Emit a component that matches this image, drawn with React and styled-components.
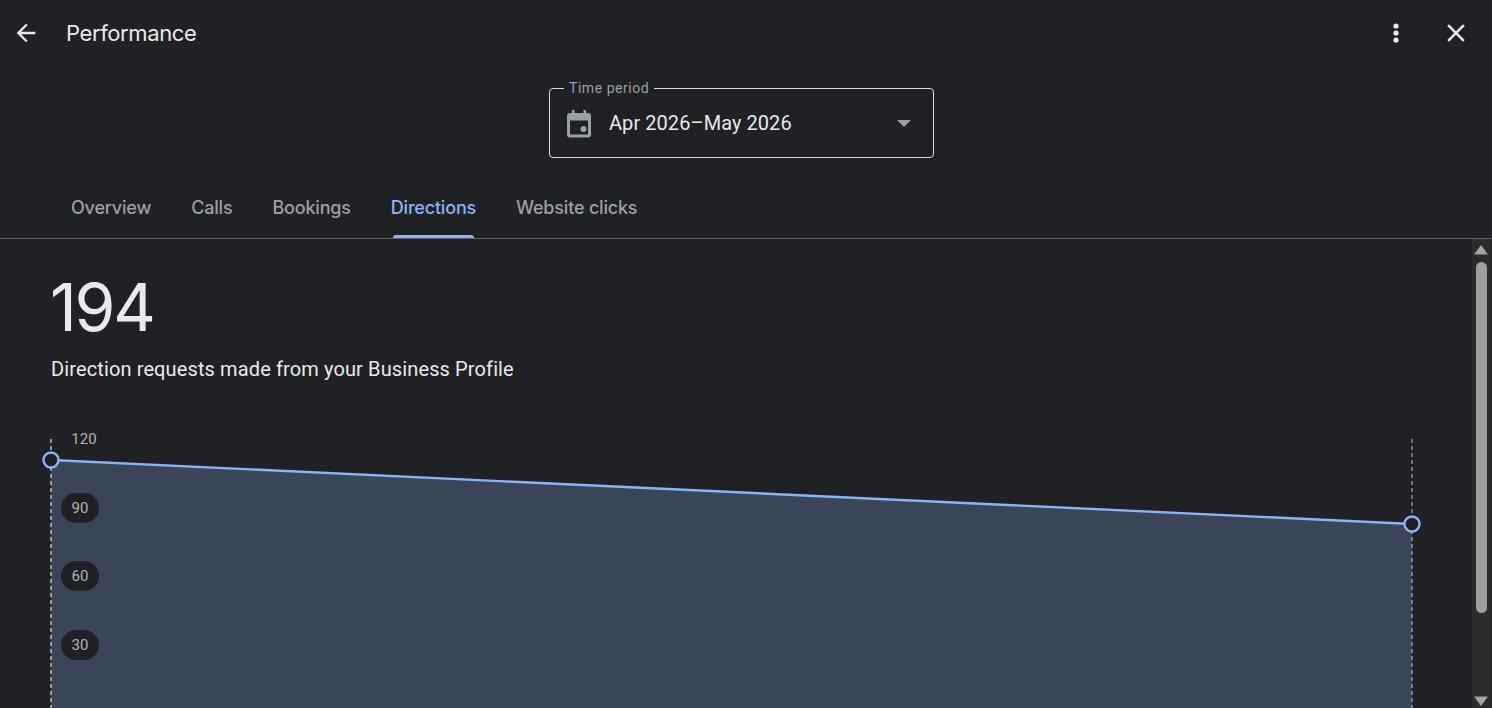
import React from "react";
import styled, { createGlobalStyle } from "styled-components";

const Global = createGlobalStyle`
  html, body { margin: 0; padding: 0; height: 708px; overflow: hidden; background: #202124; }
  * { box-sizing: border-box; }
`;

const Page = styled.div`
  width: 1492px; height: 708px; background: #202124; overflow: hidden;
  display: flex; flex-direction: column; font-family: Roboto, "Liberation Sans", sans-serif;
`;
const TopBar = styled.header`
  height: 66px; flex: none; display: flex; align-items: center; padding: 0 21px 0 11px;
`;
const IconButton = styled.button`
  width: 30px; height: 30px; padding: 0; border: 0; background: none; color: #e8eaed;
  display: flex; align-items: center; justify-content: center;
  margin-left: ${p => p.$ml || 0}px;
`;
const Title = styled.h1`
  margin: 0 0 0 25px; flex: 1; font: 400 22px/28px Inter, "Open Sans", sans-serif; letter-spacing: -0.4px; color: #e8eaed;
`;
const PickerRow = styled.div`
  flex: none; display: flex; justify-content: center; padding: 22px 9px 0 0; height: 92px;
`;
const Picker = styled.div`
  position: relative; width: 385px; height: 70px; border: 1px solid #dadce0; border-radius: 4px;
  display: flex; align-items: center; padding: 0 22px 0 17px;
`;
const PickerLabel = styled.span`
  position: absolute; left: 14px; top: -9px; padding: 0 5px; background: #202124;
  font-size: 14px; line-height: 16px; color: #9aa0a6; letter-spacing: 0.55px;
`;
const PickerValue = styled.span`
  margin-left: 18px; flex: 1; font-size: 20px; letter-spacing: 0.06px; line-height: 26px; color: #e8eaed;
`;
const Tabs = styled.nav`
  flex: none; height: 81px; display: flex; align-items: stretch; padding-left: 51px;
  border-bottom: 1px solid #5f6368;
`;
const Tab = styled.div`
  position: relative; padding: 38px 20px 0; font: 500 18px/24px Inter, Roboto, sans-serif; letter-spacing: -0.19px;
  color: ${p => (p.$active ? "#8ab4f8" : "#9aa0a6")};
  ${p => p.$active && `&::after { content: ""; position: absolute; left: 22px; right: 22px; bottom: 0; height: 3px; background: #8ab4f8; border-radius: 3px 3px 0 0; }`}
`;
const Body = styled.div`
  flex: 1; min-height: 0; display: flex;
`;
const Content = styled.main`
  flex: 1; min-width: 0; padding: 29px 0 0 51px; overflow: hidden;
`;
const Total = styled.div`
  font: 400 66px/78px Inter, "Open Sans", sans-serif; letter-spacing: -2.3px; color: #e8eaed; margin-left: -1px;
`;
const Caption = styled.p`
  margin: 10px 0 0; font-size: 20px; letter-spacing: 0.12px; line-height: 26px; color: #e8eaed;
`;
const Chart = styled.div`
  position: relative; margin: 57px 0 0; height: 280px;
`;
const ChartSvg = styled.svg`
  position: absolute; left: -11px; top: 0; overflow: visible; display: block;
`;
const AxisLabel = styled.span`
  position: absolute; left: ${p => (p.$plain ? 14 : 10)}px; top: ${p => p.$top}px; width: 38px; height: 30px; border-radius: 15px;
  display: flex; align-items: center; justify-content: center;
  font-size: 15px; color: #b0b3b8; background: ${p => (p.$plain ? "transparent" : "#202124")};
`;
const Scrollbar = styled.aside`
  flex: none; width: 20px; background: #2b2b2b; display: flex; flex-direction: column; align-items: center;
  position: relative; padding: 6px 1px 0 0; border-right: 1px solid #202124;
`;
const ScrollThumb = styled.div`
  width: 11px; height: 351px; margin-top: 7px; border-radius: 6px; background: #9f9f9f;
`;
const ScrollArrow = styled.svg`
  display: block; flex: none;
`;
const ScrollDown = styled(ScrollArrow)`
  margin-top: auto; margin-bottom: 2px;
`;

const points = { x0: 11, y0: 21, x1: 1372, y1: 85 };

export default function App() {
  return (
    <Page>
      <Global />
      <TopBar>
        <IconButton aria-label="Back">
          <svg width="28" height="28" viewBox="0 0 24 24" fill="currentColor"><path d="M20 11H7.83l5.59-5.59L12 4l-8 8 8 8 1.41-1.41L7.83 13H20v-2z" /></svg>
        </IconButton>
        <Title>Performance</Title>
        <IconButton aria-label="More">
          <svg width="24" height="24" viewBox="0 0 24 24" fill="currentColor"><circle cx="12" cy="5" r="2.600" /><circle cx="12" cy="12" r="2.600" /><circle cx="12" cy="19" r="2.600" /></svg>
        </IconButton>
        <IconButton aria-label="Close" $ml={30}>
          <svg width="30" height="30" viewBox="0 0 24 24" fill="currentColor"><path d="M19 6.41 17.59 5 12 10.59 6.41 5 5 6.41 10.59 12 5 17.59 6.41 19 12 13.41 17.59 19 19 17.59 13.41 12z" /></svg>
        </IconButton>
      </TopBar>
      <PickerRow>
        <Picker>
          <PickerLabel>Time period</PickerLabel>
          <svg width="24" height="30" viewBox="0 0 24 30" fill="#9aa0a6"><path d="M5 .5h2.500v3h9v-3H19v3h2A3 3 0 0 1 24 6.500V25a3 3 0 0 1-3 3H3a3 3 0 0 1-3-3V6.500a3 3 0 0 1 3-3h2zM3 11v14h18V11z" transform="translate(0 1.500)" /><circle cx="16.500" cy="21" r="3" /></svg>
          <PickerValue>Apr 2026–May 2026</PickerValue>
          <svg width="14" height="7" viewBox="0 0 14 7" fill="#9aa0a6"><path d="M0 0h14L7 7z" /></svg>
        </Picker>
      </PickerRow>
      <Tabs>
        <Tab>Overview</Tab>
        <Tab>Calls</Tab>
        <Tab>Bookings</Tab>
        <Tab $active>Directions</Tab>
        <Tab>Website clicks</Tab>
      </Tabs>
      <Body>
        <Content>
          <Total>194</Total>
          <Caption>Direction requests made from your Business Profile</Caption>
          <Chart>
            <ChartSvg width="1400" height="280" viewBox="0 0 1400 280">
              <polygon points={`${points.x0},${points.y0} ${points.x1},${points.y1} ${points.x1},280 ${points.x0},280`} fill="#3a4558" />
              <line x1={points.x0} y1="0" x2={points.x0} y2="280" stroke="#c4c7cc" strokeWidth="1.400" strokeDasharray="4 3" />
              <line x1={points.x1} y1="0" x2={points.x1} y2="280" stroke="#c4c7cc" strokeWidth="1" strokeDasharray="4 3" />
              <line x1={points.x0} y1={points.y0} x2={points.x1} y2={points.y1} stroke="#8ab4f8" strokeWidth="2.400" />
              <circle cx={points.x0} cy={points.y0} r="7.500" fill="#202124" stroke="#8ab4f8" strokeWidth="2.400" />
              <circle cx={points.x1} cy={points.y1} r="7.500" fill="#202124" stroke="#8ab4f8" strokeWidth="2.400" />
            </ChartSvg>
            <AxisLabel $plain $top={-15}>120</AxisLabel>
            <AxisLabel $top={54}>90</AxisLabel>
            <AxisLabel $top={122}>60</AxisLabel>
            <AxisLabel $top={191}>30</AxisLabel>
          </Chart>
        </Content>
        <Scrollbar>
          <ScrollArrow width="14" height="10" viewBox="0 0 14 10" fill="#a3a3a3"><path d="M7 0l7 9.500H0z" /></ScrollArrow>
          <ScrollThumb />
          <ScrollDown width="14" height="10" viewBox="0 0 14 10" fill="#a3a3a3"><path d="M0 .5h14L7 10z" /></ScrollDown>
        </Scrollbar>
      </Body>
    </Page>
  );
}
